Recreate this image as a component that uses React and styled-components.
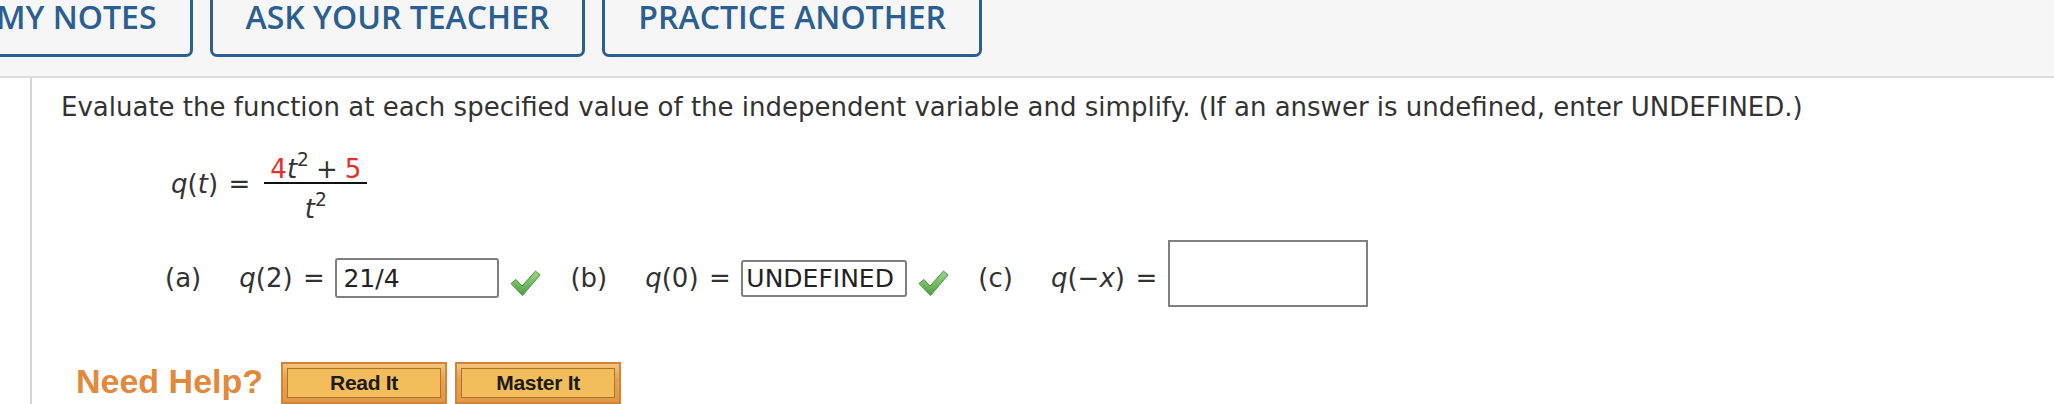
import styled, { createGlobalStyle } from 'styled-components';

const GlobalStyle = createGlobalStyle`
    html, body {
        margin: 0;
        padding: 0;
        background: #ffffff;
    }
    body {
        font-family: "DejaVu Sans", Verdana, sans-serif;
        color: #333333;
        overflow: hidden;
    }
`;

const Page = styled.div`
    width: 2054px;
    height: 404px;
    overflow: hidden;
`;

const TopBar = styled.div`
    height: 78px;
    box-sizing: border-box;
    background: #f6f6f6;
    border-bottom: 2px solid #dcdcdc;
    padding-bottom: 19px;
    display: flex;
    align-items: flex-end;
`;

const TabGroup = styled.div`
    display: flex;
    align-items: flex-end;
    gap: 17px;
    margin-left: -40px;
`;

const TabButton = styled.button`
    height: 80px;
    padding: 0 33px 21px;
    display: flex;
    align-items: flex-end;
    background: transparent;
    border: 3px solid #2b5f91;
    border-radius: 0 0 7px 7px;
    color: #2b5f91;
    font-family: "Open Sans", sans-serif;
    font-weight: 600;
    font-size: 32px;
    line-height: 32px;
    text-transform: uppercase;
    white-space: nowrap;
`;

const Content = styled.div`
    margin-left: 30px;
    border-left: 2px solid #d6d6d6;
    padding: 14px 0 0 29px;
    height: 326px;
    box-sizing: border-box;
    font-size: 26px;
`;

const Prompt = styled.p`
    margin: 0;
    line-height: 30px;
    white-space: nowrap;
`;

const MathLine = styled.div`
    display: flex;
    align-items: center;
    margin: 24px 0 0 110px;
    line-height: 30px;
`;

const Var = styled.i`
    font-style: italic;
`;

const Red = styled.span`
    color: #e8302a;
`;

const Sup = styled.sup`
    font-size: 0.72em;
    line-height: 0;
    vertical-align: 0.62em;
`;

const Eq = styled.span`
    margin: 0 10.5px;
`;

const Fraction = styled.span`
    display: inline-flex;
    flex-direction: column;
    align-items: center;
    margin-left: 3.5px;
`;

const Numer = styled.span`
    line-height: 26px;
    padding: 10px 6px 0;
    border-bottom: 2px solid #111;
`;

const Denom = styled.span`
    line-height: 26px;
    padding-top: 12px;
`;

const Plus = styled.span`
    margin: 0 7px;
`;

const AnswerRow = styled.div`
    display: flex;
    align-items: center;
    height: 48px;
    margin: 32px 0 0 104px;
    white-space: nowrap;
`;

const PartLabel = styled.span`
    margin-right: 38px;
`;

const Field = styled.input`
    box-sizing: border-box;
    width: ${(p) => p.$w}px;
    height: ${(p) => p.$h}px;
    margin: 0 0 ${(p) => p.$mb || 0}px 0;
    border: 2px solid #7f7f7f;
    border-radius: ${(p) => (p.$square ? 0 : 3)}px;
    padding: 0 ${(p) => p.$pad}px;
    font-family: "DejaVu Sans", Verdana, sans-serif;
    font-size: 25px;
    color: #222;
    background: #fff;
    outline: none;
`;

const Check = styled.svg`
    width: 31px;
    height: 28px;
    margin: 10px 29px 0 11px;
    flex: none;
`;

const HelpRow = styled.div`
    display: flex;
    align-items: flex-start;
    margin: 60px 0 0 15px;
`;

const HelpText = styled.span`
    font-family: "Liberation Sans", Arial, sans-serif;
    font-weight: 700;
    font-size: 34px;
    line-height: 36px;
    color: #e3893b;
    margin: 1px 18px 0 0;
`;

const HelpButton = styled.button`
    width: 166px;
    height: 42px;
    margin-right: 8px;
    padding: 4px;
    box-sizing: border-box;
    border: 2px solid #d2843a;
    background: linear-gradient(#f3c47f, #e9a24c 40%, #e39844);
    display: flex;
`;

const HelpFace = styled.span`
    flex: 1;
    display: flex;
    align-items: center;
    justify-content: center;
    border: 1px solid #a9742e;
    background: #f4bd5b;
    font-family: "Liberation Sans", Arial, sans-serif;
    font-weight: 700;
    font-size: 21px;
    color: #1b1b1b;
    letter-spacing: -0.3px;
`;

const CheckMark = () => (
    <Check viewBox="0 0 31 28">
        <defs>
            <linearGradient id="chk" x1="0" y1="0" x2="0" y2="1">
                <stop offset="0" stopColor="#9ad98a" />
                <stop offset="1" stopColor="#4f9e43" />
            </linearGradient>
        </defs>
        <path
            d="M1 14.5 L6 10.5 L12 17 L25.5 2 L30 6 L12.5 26.5 Z"
            fill="url(#chk)"
            stroke="#4b9340"
            strokeWidth="1"
            strokeLinejoin="round"
        />
    </Check>
);

const App = () => {
    return (
        <Page>
            <GlobalStyle />
            <TopBar>
                <TabGroup>
                    <TabButton>My Notes</TabButton>
                    <TabButton>Ask Your Teacher</TabButton>
                    <TabButton>Practice Another</TabButton>
                </TabGroup>
            </TopBar>
            <Content>
                <Prompt>
                    Evaluate the function at each specified value of the independent variable and simplify. (If an answer is undefined, enter UNDEFINED.)
                </Prompt>
                <MathLine>
                    <span>
                        <Var>q</Var>(<Var>t</Var>)
                    </span>
                    <Eq>=</Eq>
                    <Fraction>
                        <Numer>
                            <Red>4</Red>
                            <Var>t</Var>
                            <Sup>2</Sup>
                            <Plus>+</Plus>
                            <Red>5</Red>
                        </Numer>
                        <Denom>
                            <Var>t</Var>
                            <Sup>2</Sup>
                        </Denom>
                    </Fraction>
                </MathLine>
                <AnswerRow>
                    <PartLabel>(a)</PartLabel>
                    <span>
                        <Var>q</Var>(2)
                    </span>
                    <Eq>=</Eq>
                    <Field $w={164} $h={40} $pad={6} defaultValue="21/4" readOnly />
                    <CheckMark />
                    <PartLabel>(b)</PartLabel>
                    <span>
                        <Var>q</Var>(0)
                    </span>
                    <Eq>=</Eq>
                    <Field $w={166} $h={37} $pad={3} defaultValue="UNDEFINED" readOnly />
                    <CheckMark />
                    <PartLabel>(c)</PartLabel>
                    <span>
                        <Var>q</Var>(&minus;<Var>x</Var>)
                    </span>
                    <Eq>=</Eq>
                    <Field $w={200} $h={67} $mb={9} $pad={6} $square />
                </AnswerRow>
                <HelpRow>
                    <HelpText>Need Help?</HelpText>
                    <HelpButton>
                        <HelpFace>Read It</HelpFace>
                    </HelpButton>
                    <HelpButton>
                        <HelpFace>Master It</HelpFace>
                    </HelpButton>
                </HelpRow>
            </Content>
        </Page>
    );
};

export default App;
